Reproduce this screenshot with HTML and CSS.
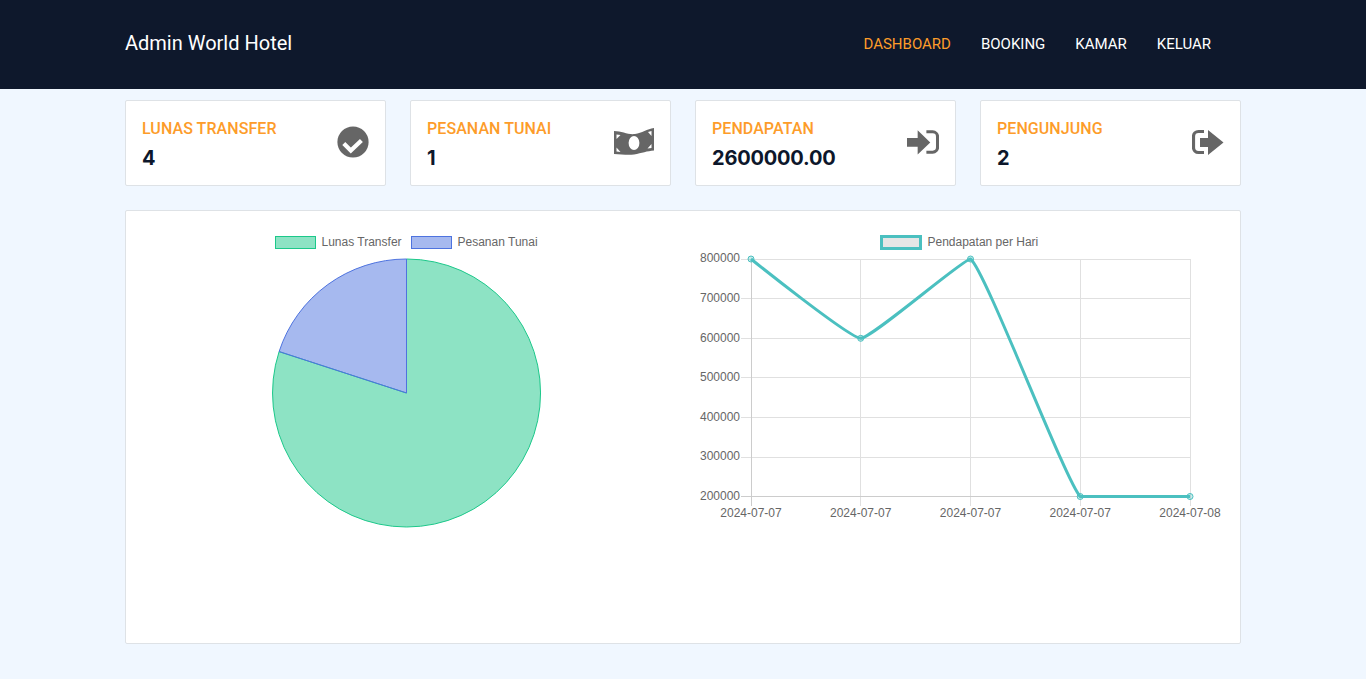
FILE: index.html
```html
<!DOCTYPE html>
<html lang="en">
<head>
  <meta charset="UTF-8">
  <meta name="viewport" content="width=device-width, initial-scale=1.0">
  <title>Admin World Hotel</title>
  <link rel="stylesheet" href="styles.css">
</head>
<body>

  <header class="topbar">
    <div class="container topbar-inner">
      <a class="brand" href="#">Admin World Hotel</a>
      <nav class="nav">
        <a class="nav-link active" href="#">Dashboard</a>
        <a class="nav-link" href="#">Booking</a>
        <a class="nav-link" href="#">Kamar</a>
        <a class="nav-link" href="#">Keluar</a>
      </nav>
    </div>
  </header>

  <main class="container">
    <section class="stats">
      <div class="stat-card">
        <div>
          <h3 class="stat-title">Lunas Transfer</h3>
          <p class="stat-value">4</p>
        </div>
        <svg class="stat-icon" viewBox="337 126 32 32">
          <circle cx="353" cy="142" r="15.6" fill="#666"/>
          <path d="M343.8 143.6l7 7 10.6-10.2" fill="none" stroke="#fff" stroke-width="4.2"/>
        </svg>
      </div>
      <div class="stat-card">
        <div>
          <h3 class="stat-title">Pesanan Tunai</h3>
          <p class="stat-value">1</p>
        </div>
        <svg class="stat-icon icon-wide" viewBox="614 126 40 32">
          <path d="M614 131C622 131 628 135 635 134C642 133 647 129 654 128V150.500C647 151 642 153 634 154.500C627 155.500 621 154 614 154Z" fill="#666"/>
          <ellipse cx="634" cy="143" rx="5.400" ry="7" fill="#fff"/>
          <path d="M616.500 134.500l4 .5-4 4zM651.500 131v5l-3.500-4zM616.500 147.500v4l4 .5zM651.500 144v4l-4 .5z" fill="#fff"/>
        </svg>
      </div>
      <div class="stat-card">
        <div>
          <h3 class="stat-title">Pendapatan</h3>
          <p class="stat-value">2600000.00</p>
        </div>
        <svg class="stat-icon" viewBox="907 126 33 32">
          <path d="M907 138h11v-8l13 12.5-13 12.5v-8h-11z" fill="#666"/>
          <path d="M927 131.500h6.500a5 5 0 0 1 5 5v11a5 5 0 0 1-5 5h-6.500" fill="none" stroke="#666" stroke-width="3.200"/>
        </svg>
      </div>
      <div class="stat-card">
        <div>
          <h3 class="stat-title">Pengunjung</h3>
          <p class="stat-value">2</p>
        </div>
        <svg class="stat-icon" viewBox="1192 126 32 32">
          <path d="M1204 131.500h-5.500a5 5 0 0 0-5 5v11a5 5 0 0 0 5 5h5.500" fill="none" stroke="#666" stroke-width="3.200"/>
          <path d="M1200 138h8v-8l15.500 12.500-15.500 12.500v-8h-8z" fill="#666"/>
        </svg>
      </div>
    </section>

    <section class="chart-panel">
      <svg class="chart" viewBox="141 226 542 402">
        <rect x="275.500" y="236.500" width="40" height="12" class="swatch-green"/>
        <text x="321.500" y="246" class="label">Lunas Transfer</text>
        <rect x="411.500" y="236.500" width="40" height="12" class="swatch-blue"/>
        <text x="457.500" y="246" class="label">Pesanan Tunai</text>
        <path d="M406.500 393V259A134 134 0 1 1 279.100 351.600Z" class="swatch-green"/>
        <path d="M406.500 393L279.100 351.600A134 134 0 0 1 406.500 259Z" class="swatch-blue"/>
      </svg>

      <svg class="chart" viewBox="683 226 542 402">
        <rect x="881.500" y="236.500" width="39" height="12" class="line-swatch"/>
        <text x="927.500" y="246" class="label">Pendapatan per Hari</text>

        <path class="grid" d="M741 259.500H1190.500M741 298.500H1190.500M741 338.500H1190.500M741 377.500H1190.500M741 417.500H1190.500M741 457.500H1190.500M860.500 259V506M970.500 259V506M1080.500 259V506M1190.500 259V506"/>
        <path class="axis" d="M751.500 259V506M741 496.500H1190.500"/>

        <text x="741" y="262" class="label tick-y">800000</text>
        <text x="741" y="302" class="label tick-y">700000</text>
        <text x="741" y="342" class="label tick-y">600000</text>
        <text x="741" y="381" class="label tick-y">500000</text>
        <text x="741" y="421" class="label tick-y">400000</text>
        <text x="741" y="460" class="label tick-y">300000</text>
        <text x="741" y="500" class="label tick-y">200000</text>

        <text x="751" y="517" class="label tick-x">2024-07-07</text>
        <text x="860.700" y="517" class="label tick-x">2024-07-07</text>
        <text x="970.500" y="517" class="label tick-x">2024-07-07</text>
        <text x="1080.200" y="517" class="label tick-x">2024-07-07</text>
        <text x="1190" y="517" class="label tick-x">2024-07-08</text>

        <path class="series" d="M751 259C751 259 849.700 338.300 860.700 338.300C871.700 338.300 963 259 970.500 259C985 269.500 1064.800 479.800 1080.200 496.500C1086 496.500 1190 496.500 1190 496.500"/>
        <circle cx="751" cy="259" r="3" class="point"/>
        <circle cx="860.700" cy="338.300" r="3" class="point"/>
        <circle cx="970.500" cy="259" r="3" class="point"/>
        <circle cx="1080.200" cy="496.500" r="3" class="point"/>
        <circle cx="1190" cy="496.500" r="3" class="point"/>
      </svg>
    </section>
  </main>

</body>
</html>
```

FILE: styles.css
```css
/* General Styles */
body {
  margin: 0;
  font-family: 'Roboto', sans-serif;
  background: #f0f7ff;
}

.container {
  width: 1116px;
  margin: 0 auto;
}

/* Top bar */
.topbar {
  height: 89px;
  background: #0e182c;
}

.topbar-inner {
  display: flex;
  justify-content: space-between;
  align-items: center;
  box-sizing: border-box;
  height: 100%;
  padding-bottom: 3px;
}

.brand {
  color: #fff;
  font-size: 20px;
  text-decoration: none;
}

.nav {
  display: flex;
  gap: 30px;
  padding-top: 1px;
  padding-right: 30px;
}

.nav-link {
  color: #fff;
  font-size: 15px;
  text-transform: uppercase;
  text-decoration: none;
}

.nav-link.active {
  color: #fd9c2a;
}

/* Stat cards */
.stats {
  display: grid;
  grid-template-columns: repeat(4, 261px);
  justify-content: space-between;
  margin-top: 11px;
}

.stat-card {
  display: flex;
  justify-content: space-between;
  align-items: center;
  box-sizing: border-box;
  height: 86px;
  padding: 2px 16px 0;
  background: #fff;
  border: 1px solid #dee2e6;
  border-radius: 2px;
}

.stat-card .stat-icon {
  margin-top: -4px;
}

.stat-title {
  margin: 0 0 8px;
  color: #fd9c2a;
  font-size: 16px;
  font-weight: 500;
  letter-spacing: 0.07px;
  text-transform: uppercase;
}

.stat-value {
  margin: 0;
  color: #0d172b;
  font-family: 'Inter', sans-serif;
  font-size: 20px;
  font-weight: 700;
  letter-spacing: -0.2px;
}

.stat-icon {
  width: 32px;
  height: 32px;
  flex: none;
}

.icon-wide {
  width: 40px;
}

/* Charts */
.chart-panel {
  display: grid;
  grid-template-columns: 1fr 1fr;
  box-sizing: border-box;
  height: 434px;
  margin-top: 24px;
  padding: 15px;
  background: #fff;
  border: 1px solid #dee2e6;
  border-radius: 2px;
}

.chart {
  display: block;
  width: 542px;
  height: 402px;
}

.label {
  fill: #666;
  font-family: 'Liberation Sans', sans-serif;
  font-size: 12px;
}

.tick-y {
  text-anchor: end;
  transform: translateX(-1px);
}

.tick-x {
  text-anchor: middle;
}

.swatch-green {
  fill: rgba(28, 200, 138, 0.5);
  stroke: #1cc88a;
}

.swatch-blue {
  fill: rgba(78, 115, 223, 0.5);
  stroke: #4e73df;
}

.line-swatch {
  fill: #e6e6e6;
  stroke: #4bc0c0;
  stroke-width: 3;
}

.grid {
  fill: none;
  stroke: #e0e0e0;
}

.axis {
  fill: none;
  stroke: #ccc;
}

.series {
  fill: none;
  stroke: #4bc0c0;
  stroke-width: 3;
}

.point {
  fill: rgba(75, 192, 192, 0.3);
  stroke: #4bc0c0;
}
```
